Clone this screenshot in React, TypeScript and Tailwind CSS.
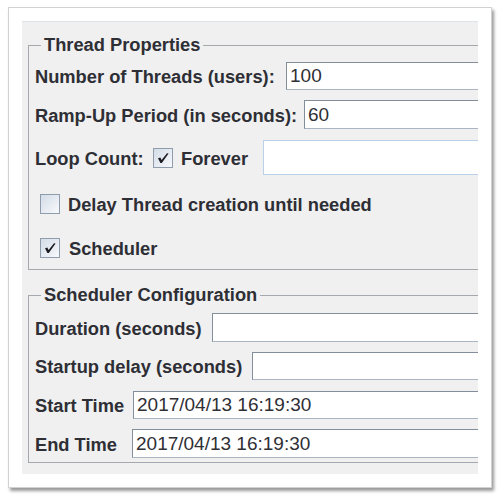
import type { ReactNode } from 'react';

const font = "font-['Liberation_Sans',Arial,sans-serif]";

const Check = ({ checked }: { checked: boolean }) => (
  <div className="flex h-[20px] w-[20px] shrink-0 items-center justify-center border border-[#8e9cab] bg-gradient-to-br from-[#d3dce7] to-[#f8fafc]">
    {checked && (
      <svg width="14" height="14" viewBox="0 0 14 14">
        <path d="M2 7.2 L4.3 6.6 L5.6 9 L11 2.2 L12.6 2.6 L5.8 12 L4.4 12 Z" fill="#1c1c22" />
      </svg>
    )}
  </div>
);

const Field = ({ value }: { value?: string }) => (
  <div className="flex h-full flex-1 items-center border border-[#838e9b] border-b-[#a9b5c2] border-r-0 bg-white pl-[3px] text-[19px] font-normal leading-[20px] text-[#2f2f36]">
    {value}
  </div>
);

const Row = ({ children, className }: { children: ReactNode; className: string }) => (
  <div className={`flex items-center ${className}`}>{children}</div>
);

const Group = ({ title, children, className }: { title: string; children: ReactNode; className: string }) => (
  <fieldset className={`ml-[6px] w-[480px] border border-[#a5a8ac] pl-[6px] ${className}`}>
    <legend className="ml-[6px] px-[3px] leading-[20px]">{title}</legend>
    {children}
  </fieldset>
);

export default function App() {
  return (
    <div className={`h-[497px] w-[502px] bg-white pl-[8px] pt-[7px] ${font} text-[18.3px] font-bold leading-[20px] text-[#2e2e35]`}>
      <div className="h-[481px] w-[484px] border border-[#d2d2d2] bg-white p-[13px] shadow-[2px_3px_3px_rgba(0,0,0,0.4)]">
        <div className="h-[453px] overflow-hidden border-t border-[#dce3eb] bg-[#f0f0f0] pt-[13px]">
          <Group title="Thread Properties" className="pb-[11px]">
            <Row className="mt-[7px] h-[28px]">
              <span className="w-[251px] shrink-0 pt-[2px]">Number of Threads (users):</span>
              <Field value="100" />
            </Row>
            <Row className="mt-[10px] h-[29px]">
              <span className="w-[269px] shrink-0 pt-[2px]">Ramp-Up Period (in seconds):</span>
              <Field value="60" />
            </Row>
            <Row className="mt-[11px] h-[35px]">
              <span className="w-[118px] shrink-0 pt-[2px]">Loop Count:</span>
              <Check checked />
              <span className="ml-[8px] w-[82px] shrink-0 pt-[2px]">Forever</span>
              <div className="h-[35px] flex-1 border border-r-0 border-[#b9d0e6] bg-white" />
            </Row>
            <Row className="mt-[19px] h-[20px] pl-[5px]">
              <Check checked={false} />
              <span className="ml-[8px] pt-[1px]">Delay Thread creation until needed</span>
            </Row>
            <Row className="mt-[24px] h-[20px] pl-[5px]">
              <Check checked />
              <span className="ml-[9px] pt-[1px]">Scheduler</span>
            </Row>
          </Group>
          <Group title="Scheduler Configuration" className="mt-[15px] pb-[4px]">
            <Row className="mt-[8px] h-[29px]">
              <span className="w-[177px] shrink-0 pt-[2px]">Duration (seconds)</span>
              <Field />
            </Row>
            <Row className="mt-[10px] h-[28px]">
              <span className="w-[217px] shrink-0 pt-[2px]">Startup delay (seconds)</span>
              <Field />
            </Row>
            <Row className="mt-[11px] h-[28px]">
              <span className="w-[98px] shrink-0 pt-[2px]">Start Time</span>
              <Field value="2017/04/13 16:19:30" />
            </Row>
            <Row className="mt-[10px] h-[29px]">
              <span className="w-[97px] shrink-0 pt-[2px]">End Time</span>
              <Field value="2017/04/13 16:19:30" />
            </Row>
          </Group>
        </div>
      </div>
    </div>
  );
}
